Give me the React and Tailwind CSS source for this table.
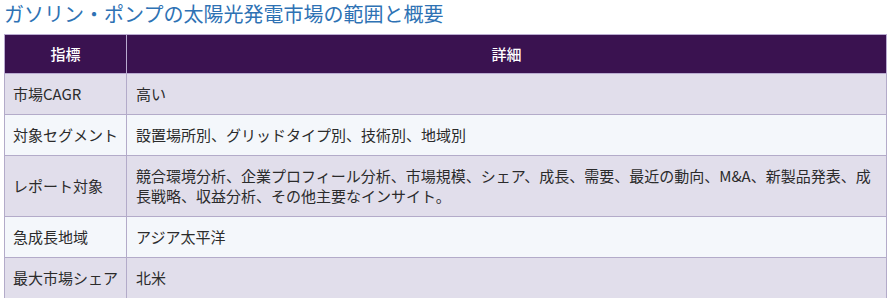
const rows = [
  { label: '市場CAGR', value: '高い' },
  { label: '対象セグメント', value: '設置場所別、グリッドタイプ別、技術別、地域別' },
  {
    label: 'レポート対象',
    value:
      '競合環境分析、企業プロフィール分析、市場規模、シェア、成長、需要、最近の動向、M&A、新製品発表、成長戦略、収益分析、その他主要なインサイト。',
  },
  { label: '急成長地域', value: 'アジア太平洋' },
  { label: '最大市場シェア', value: '北米' },
];

export default function App() {
  return (
    <div className="h-[298px] w-[888px] overflow-hidden bg-white px-[4px] font-['Noto_Sans_CJK_JP','Noto_Sans',sans-serif]">
      <h2 className="h-[34px] pt-[1px] text-[20px] leading-[26px] text-[#2e72b4]">
        ガソリン・ポンプの太陽光発電市場の範囲と概要
      </h2>
      <table className="w-[883px] border-collapse text-[15px] leading-[20px] text-[#2b2b2b]">
        <thead>
          <tr className="bg-[#3a1250] text-white">
            <th className="w-[122px] border border-[#b9abd0] px-[9px] py-[9px] text-center font-medium">
              指標
            </th>
            <th className="border border-[#b9abd0] px-[9px] py-[9px] text-center font-medium">詳細</th>
          </tr>
        </thead>
        <tbody>
          {rows.map((row, i) => (
            <tr key={row.label} className={i % 2 === 0 ? 'bg-[#e1deeb]' : 'bg-[#f4f7fb]'}>
              <td className="border border-[#b3abc9] px-[8px] py-[10px] align-middle">{row.label}</td>
              <td className="border border-[#b3abc9] px-[9px] py-[10px] align-middle">{row.value}</td>
            </tr>
          ))}
        </tbody>
      </table>
    </div>
  );
}
